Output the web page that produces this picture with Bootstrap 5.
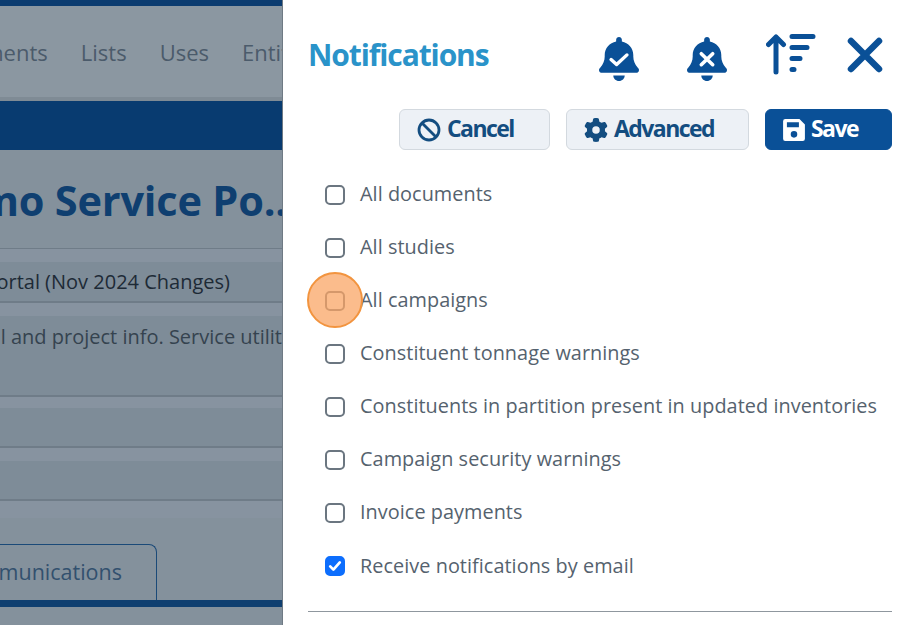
<!DOCTYPE html>
<html lang="en">
<head>
<meta charset="utf-8">
<title>Notifications</title>
<link href="https://cdn.jsdelivr.net/npm/bootstrap@5.3.0/dist/css/bootstrap.min.css" rel="stylesheet">
<style>
html,body{height:625px;overflow:hidden;background:#fff}
body{font-family:"Open Sans","Liberation Sans",sans-serif}
.stage{width:907px;height:625px;position:relative}
.backpage{width:283px;height:625px;overflow:hidden;background:#84919c;border-right:1px solid #6f7a84}
.backpage>*{flex:none}
.endclip{display:flex;justify-content:flex-end;white-space:nowrap;overflow:hidden}
.topstrip{height:6px;background:#0c3c70}
.topnav{height:91px;background:#8b97a1;gap:33px;font-size:22px;color:#4b5b6b;align-items:center;white-space:nowrap;overflow:hidden;display:flex;padding-top:1px}
.topnav>span:first-child{margin-left:-70px}
.navshade{height:4px;background:#7f8b95}
.bluebar{height:49px;background:#083b70}
.pagetitle{height:98px;align-items:center;font-size:41.5px;font-weight:700;color:#0f3f70;padding-top:4px;margin:0;letter-spacing:-.2px}
.pagetitle>span{margin-right:-5px}
.cellrow{border-bottom:1px solid #6f7c88;background:#7e8c98;color:#1d2a36;font-size:20px;align-items:center}
.gapstrip{background:#8793a0;border-top:1px solid #6f7c88}
.h14{height:14px}.h12{height:12px}.h18{height:18px}
.h40{height:40px}.h39{height:39px}.h80{height:80px}
.descrow{align-items:flex-start;padding-top:6px;color:#35434f}
.tabarea{height:82px;display:flex;align-items:flex-end}
.tabbox{height:56px;width:157px;border:1px solid #1b4a78;border-bottom:0;border-left:0;border-radius:0 8px 0 0;color:#32506e;font-size:21.5px;padding:11px 34px 0 0;white-space:nowrap;display:flex;justify-content:flex-end;overflow:hidden}
.navyline{height:7px;background:#0f3f70}
.sidepanel{width:624px;height:625px;background:#fff;padding:28px 15px 0 25px}
.paneltitle{font-size:30px;font-weight:700;color:#2a93c9;letter-spacing:-1.1px;margin:0;line-height:54px}
.iconbtn{background:none;border:0;padding:0;display:flex;align-items:center;justify-content:center;color:#0a5097}
.topicons{margin-right:9px;height:54px}
.iconbtn.bellone{width:40px;margin:7px 48px 0 0}
.iconbtn.belltwo{width:40px;margin:7px 39px 0 0}
.iconbtn.sortup{width:50px;margin:-3px 31px 0 0}
.iconbtn.closex{width:36px}
.actionrow{gap:16px;margin-top:27px}
.actionbtn{height:41px;border-radius:6px;font-size:23px;font-weight:700;letter-spacing:-1.55px;display:flex;align-items:center;gap:6px;padding:0 0 2px 17px;line-height:1}
.actionbtn svg{position:relative;top:1px}
.actionbtn.softbtn{background:#edf1f6;border:1px solid #d3d9df;color:#134d80}
.actionbtn.softbtn:hover{background:#edf1f6;color:#134d80}
.actionbtn.mainbtn{background:#0a5097;border:1px solid #0a5097;color:#fff;padding-left:16px;gap:5px}
.w-cancel{width:151px}.w-adv{width:183px}.w-save{width:127px}
.checklist{margin-top:18px}
.checkline{height:53.14px;margin:0;padding:0;display:flex;align-items:center;gap:15px}
.checkline .form-check-input{float:none;margin:0 0 0 17px;width:20px;height:20px;border:2px solid #6b7680;border-radius:5px;flex:none}
.checkline .form-check-input:checked{background-color:#0d6efd;border-color:#0d6efd;background-size:100%;--bs-form-check-bg-image:url("data:image/svg+xml,%3csvg xmlns='http://www.w3.org/2000/svg' viewBox='0 0 20 20'%3e%3cpath fill='none' stroke='%23fff' stroke-linecap='round' stroke-linejoin='round' stroke-width='3.4' d='M4 10.500l4 4 8-9'/%3e%3c/svg%3e")}
.checkline .form-check-label{font-size:19.85px;color:#55626e;letter-spacing:.05px;white-space:nowrap;position:relative;top:-1px}
.panelrule{margin:18px 0 0 0;border:0;border-top:1px solid #8f979e;opacity:1}
.clickspot{position:absolute;left:307px;top:272px;width:56px;height:56px;border-radius:50%;background:rgba(249,165,100,.74);border:2px solid #f2943f}
</style>
</head>
<body>
<div class="stage d-flex">
  <div class="backpage d-flex flex-column">
    <div class="topstrip"></div>
    <div class="topnav"><span>Documents</span><span>Lists</span><span>Uses</span><span>Entities</span></div>
    <div class="navshade"></div>
    <div class="bluebar"></div>
    <h1 class="pagetitle endclip"><span>Demo Service Po..</span></h1>
    <div class="gapstrip h14"></div>
    <div class="cellrow h40 endclip"><span class="pe-5 me-1">Service Portal (Nov 2024 Changes)</span></div>
    <div class="gapstrip h14"></div>
    <div class="cellrow h80 descrow endclip"><span>Portal and project info. Service utilit</span></div>
    <div class="gapstrip h12"></div>
    <div class="cellrow h39"></div>
    <div class="gapstrip h14"></div>
    <div class="cellrow h39"></div>
    <div class="gapstrip h18"></div>
    <div class="tabarea"><div class="tabbox"><span>Communications</span></div></div>
    <div class="navyline"></div>
  </div>
  <aside class="sidepanel flex-grow-1">
    <div class="d-flex align-items-center justify-content-between">
      <h2 class="paneltitle">Notifications</h2>
      <div class="topicons d-flex align-items-center">
        <button class="iconbtn bellone" type="button" aria-label="Enable all"><svg width="40" height="44" viewBox="0 0 448 512" preserveAspectRatio="none"><path fill="currentColor" d="M224 0c-17.700 0-32 14.300-32 32V51.200C119 66 64 130.600 64 208v18.800c0 47-17.300 92.400-48.500 127.600l-7.400 8.300c-8.400 9.400-10.400 22.900-5.300 34.400S19.400 416 32 416H416c12.600 0 24-7.400 29.200-18.900s3.100-25-5.300-34.400l-7.400-8.300C401.300 319.200 384 273.900 384 226.800V208c0-77.400-55-142-128-156.800V32c0-17.700-14.300-32-32-32zM288 448H160c0 35 29 64 64 64s64-29 64-64z"/><path d="M135 262l62 58 116-112" fill="none" stroke="#fff" stroke-width="38" stroke-linecap="round" stroke-linejoin="round"/></svg></button>
        <button class="iconbtn belltwo" type="button" aria-label="Disable all"><svg width="40" height="44" viewBox="0 0 448 512" preserveAspectRatio="none"><path fill="currentColor" d="M224 0c-17.700 0-32 14.300-32 32V51.200C119 66 64 130.600 64 208v18.800c0 47-17.300 92.400-48.500 127.600l-7.400 8.300c-8.400 9.400-10.400 22.900-5.300 34.400S19.400 416 32 416H416c12.600 0 24-7.400 29.200-18.900s3.100-25-5.300-34.400l-7.400-8.300C401.300 319.200 384 273.900 384 226.800V208c0-77.400-55-142-128-156.800V32c0-17.700-14.300-32-32-32zM288 448H160c0 35 29 64 64 64s64-29 64-64z"/><path d="M160 194l128 128M288 194L160 322" fill="none" stroke="#fff" stroke-width="40" stroke-linecap="round"/></svg></button>
        <button class="iconbtn sortup" type="button" aria-label="Sort"><svg width="50" height="42" viewBox="0 0 50 42"><g fill="none" stroke="currentColor" stroke-width="5" stroke-linecap="round" stroke-linejoin="round"><path d="M10 39V4M2.500 11.500L10 4l7.500 7.500"/></g><g fill="none" stroke="currentColor" stroke-width="5" stroke-linecap="round"><path d="M26 3.500h21M26 14.500h15M26 25.500h8M26 36.500h2"/></g></svg></button>
        <button class="iconbtn closex" type="button" aria-label="Close"><svg width="36" height="36" viewBox="0 0 36 36"><path d="M4 4l28 28M32 4L4 32" fill="none" stroke="currentColor" stroke-width="6.500" stroke-linecap="round"/></svg></button>
      </div>
    </div>
    <div class="actionrow d-flex justify-content-end">
      <button class="btn actionbtn softbtn w-cancel" type="button"><svg width="24" height="24" viewBox="0 0 24 24"><circle cx="12" cy="12" r="10" fill="none" stroke="currentColor" stroke-width="2.800"/><path d="M5 5l14 14" stroke="currentColor" stroke-width="2.800"/></svg>Cancel</button>
      <button class="btn actionbtn softbtn w-adv" type="button"><svg width="24" height="24" viewBox="0 0 512 512"><path fill="currentColor" d="M495.900 166.600c3.200 8.700 .5 18.400-6.400 24.600l-43.300 39.400c1.100 8.300 1.700 16.800 1.700 25.400s-.6 17.100-1.700 25.400l43.300 39.400c6.900 6.200 9.600 15.900 6.400 24.600c-4.400 11.900-9.700 23.300-15.800 34.300l-4.700 8.100c-6.600 11-14 21.400-22.100 31.200c-5.900 7.200-15.700 9.600-24.500 6.800l-55.700-17.700c-13.400 10.300-28.200 18.900-44 25.400l-12.500 57.100c-2 9.100-9 16.300-18.200 17.800c-13.800 2.300-28 3.500-42.500 3.500s-28.700-1.200-42.500-3.500c-9.200-1.500-16.200-8.700-18.200-17.800l-12.500-57.100c-15.800-6.500-30.600-15.100-44-25.400L83.100 425.900c-8.800 2.800-18.600 .3-24.500-6.800c-8.100-9.800-15.500-20.200-22.100-31.200l-4.700-8.100c-6.100-11-11.400-22.400-15.800-34.300c-3.200-8.700-.5-18.400 6.400-24.600l43.300-39.400C64.600 273.100 64 264.600 64 256s.6-17.100 1.700-25.400L22.400 191.200c-6.900-6.200-9.600-15.900-6.400-24.600c4.400-11.900 9.700-23.300 15.800-34.300l4.700-8.100c6.600-11 14-21.400 22.100-31.200c5.900-7.200 15.700-9.600 24.500-6.800l55.700 17.700c13.400-10.300 28.200-18.900 44-25.400l12.500-57.100c2-9.100 9-16.300 18.200-17.800C227.300 1.200 241.500 0 256 0s28.700 1.200 42.500 3.500c9.200 1.500 16.200 8.700 18.200 17.800l12.500 57.100c15.800 6.500 30.600 15.100 44 25.400l55.700-17.700c8.800-2.800 18.600-.3 24.500 6.800c8.100 9.800 15.500 20.200 22.100 31.200l4.700 8.100c6.100 11 11.400 22.400 15.800 34.300zM256 336a80 80 0 1 0 0-160 80 80 0 1 0 0 160z"/></svg>Advanced</button>
      <button class="btn actionbtn mainbtn w-save" type="button"><svg width="24" height="24" viewBox="0 0 22 22"><path fill="#fff" fill-rule="evenodd" d="M3 1h13l5 5v13a2 2 0 0 1-2 2H3a2 2 0 0 1-2-2V3a2 2 0 0 1 2-2zm1.500 3v4.500h11V4zM11 12a3 3 0 1 0 0 6 3 3 0 0 0 0-6z"/></svg>Save</button>
    </div>
    <form class="checklist">
      <div class="form-check checkline"><input class="form-check-input" type="checkbox" id="c1"><label class="form-check-label" for="c1">All documents</label></div>
      <div class="form-check checkline"><input class="form-check-input" type="checkbox" id="c2"><label class="form-check-label" for="c2">All studies</label></div>
      <div class="form-check checkline"><input class="form-check-input" type="checkbox" id="c3"><label class="form-check-label" for="c3">All campaigns</label></div>
      <div class="form-check checkline"><input class="form-check-input" type="checkbox" id="c4"><label class="form-check-label" for="c4">Constituent tonnage warnings</label></div>
      <div class="form-check checkline"><input class="form-check-input" type="checkbox" id="c5"><label class="form-check-label" for="c5">Constituents in partition present in updated inventories</label></div>
      <div class="form-check checkline"><input class="form-check-input" type="checkbox" id="c6"><label class="form-check-label" for="c6">Campaign security warnings</label></div>
      <div class="form-check checkline"><input class="form-check-input" type="checkbox" id="c7"><label class="form-check-label" for="c7">Invoice payments</label></div>
      <div class="form-check checkline"><input class="form-check-input" type="checkbox" id="c8" checked><label class="form-check-label" for="c8">Receive notifications by email</label></div>
    </form>
    <hr class="panelrule">
  </aside>
  <div class="clickspot"></div>
</div>
<script src="https://cdn.jsdelivr.net/npm/bootstrap@5.3.0/dist/js/bootstrap.bundle.min.js"></script>
</body>
</html>
